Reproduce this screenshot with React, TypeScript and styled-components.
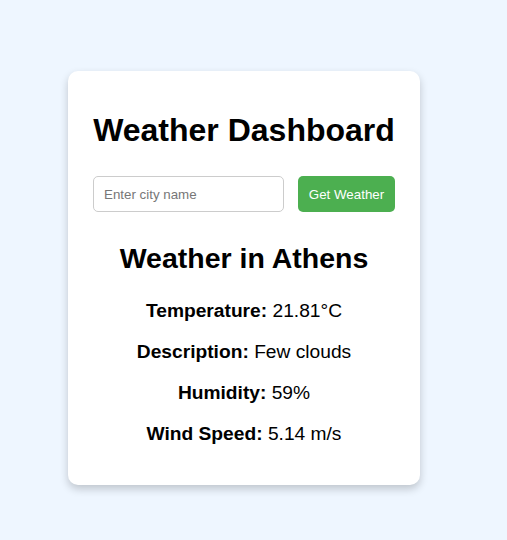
import React from "react";
import styled, { createGlobalStyle } from "styled-components";

const Global = createGlobalStyle`
  html, body { margin: 0; padding: 0; }
  body {
    background: #eef6ff;
    font-family: "Liberation Sans", Arial, sans-serif;
    color: #000;
  }
`;

const Page = styled.div`
  display: flex;
  justify-content: flex-start;
  padding: 71px 0 0 68px;
  min-height: 540px;
  box-sizing: border-box;
`;

const Card = styled.div`
  width: 312px;
  padding: 20px;
  background: #fff;
  border-radius: 10px;
  box-shadow: 0 4px 8px rgba(0, 0, 0, 0.2);
  text-align: center;
  align-self: flex-start;
`;

const Title = styled.h1`
  font-size: 32px;
  font-weight: bold;
  margin: 21.44px 0;
`;

const Form = styled.div`
  display: flex;
  justify-content: space-between;
  padding: 5px;
  gap: 14px;
`;

const Input = styled.input`
  width: 191px;
  height: 36px;
  box-sizing: border-box;
  padding: 9px 10px 7px;
  border: 1px solid #ccc;
  border-radius: 5px;
  font-family: "Liberation Sans", Arial, sans-serif;
  font-size: 13.33px;
  &::placeholder { color: #777; }
`;

const Button = styled.button`
  width: 97px;
  height: 36px;
  padding: 2px 0 0;
  background: #4caf50;
  color: #fff;
  border: none;
  border-radius: 5px;
  font-family: "Liberation Sans", Arial, sans-serif;
  font-size: 13.33px;
  cursor: pointer;
`;

const Subtitle = styled.h2`
  font-size: 28.5px;
  font-weight: bold;
  margin: 25px 0 25px;
`;

const Line = styled.p`
  font-size: 19.2px;
  margin: 19.2px 0;
  &:last-child { margin-bottom: 20px; }
`;

const rows = [
  ["Temperature:", "21.81°C"],
  ["Description:", "Few clouds"],
  ["Humidity:", "59%"],
  ["Wind Speed:", "5.14 m/s"],
];

export default function App() {
  return (
    <>
      <Global />
      <Page>
        <Card>
          <Title>Weather Dashboard</Title>
          <Form>
            <Input placeholder="Enter city name" />
            <Button>Get Weather</Button>
          </Form>
          <div>
            <Subtitle>Weather in Athens</Subtitle>
            {rows.map(([k, v]) => (
              <Line key={k}>
                <strong>{k}</strong> {v}
              </Line>
            ))}
          </div>
        </Card>
      </Page>
    </>
  );
}
